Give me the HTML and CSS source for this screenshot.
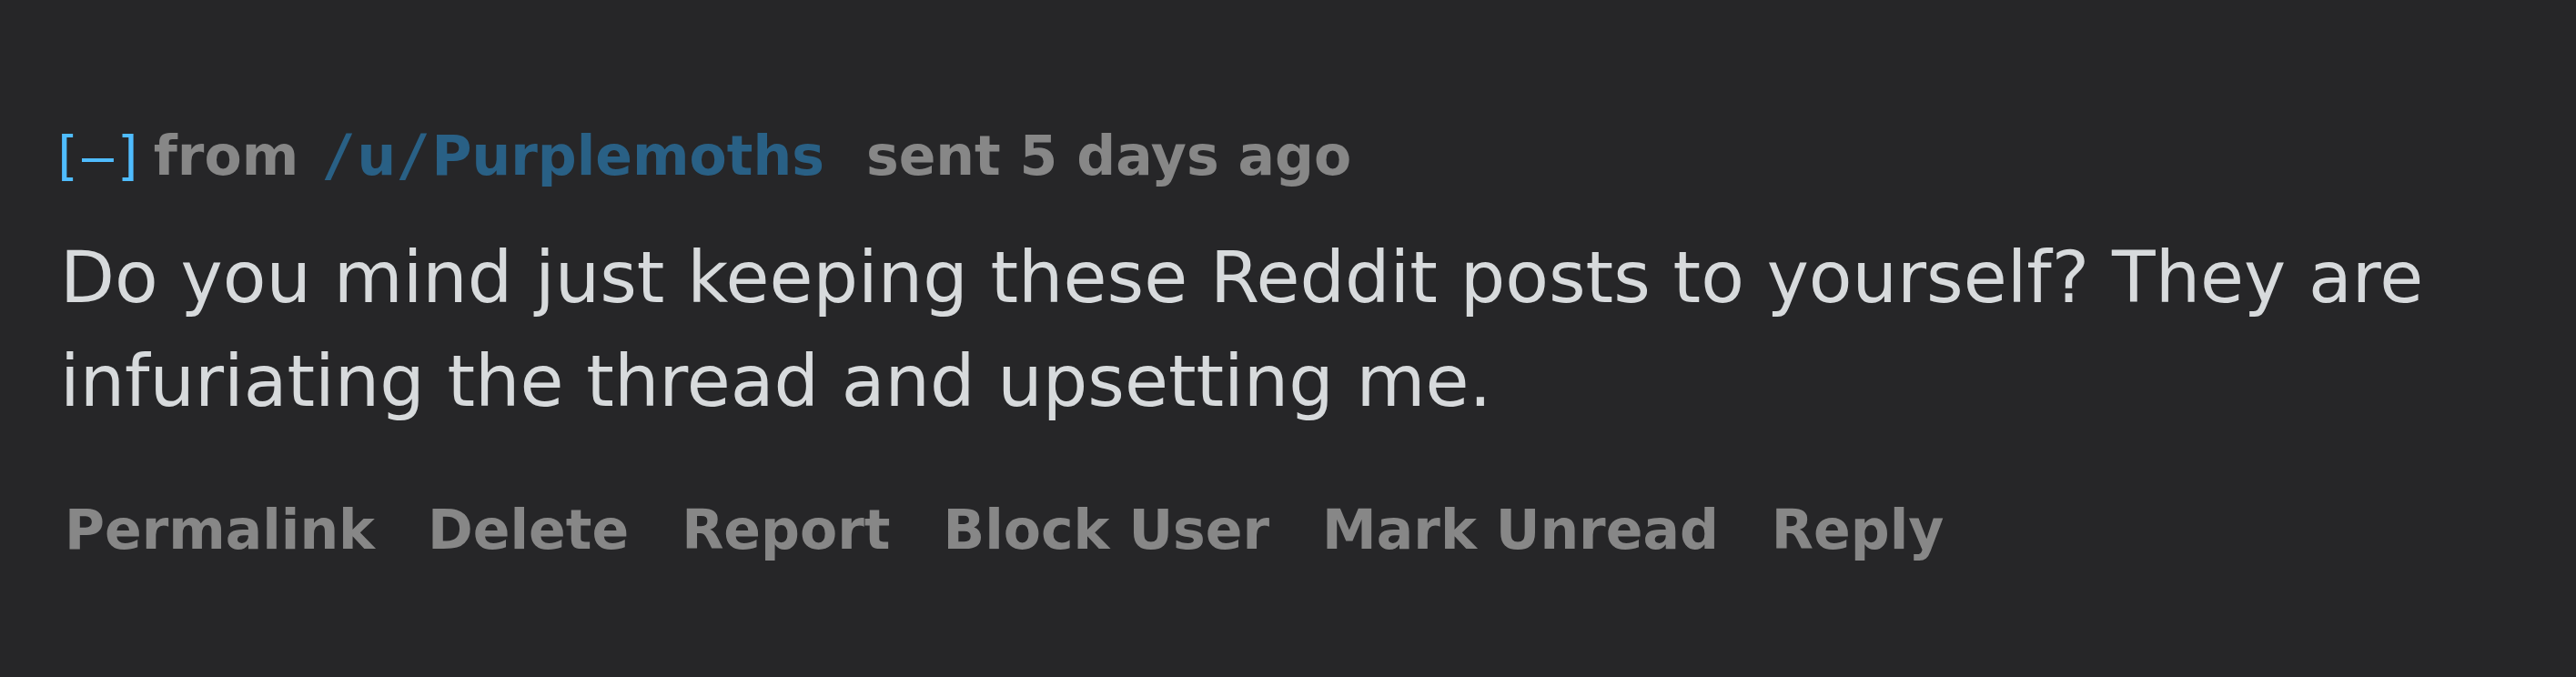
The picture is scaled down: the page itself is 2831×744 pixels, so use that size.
FILE: index.html
```html
<!DOCTYPE html>
<html>
<head>
<meta charset="utf-8">
<link rel="stylesheet" href="styles.css">
</head>
<body>
<div class="message">
  <div class="tagline">
    <span class="expand">[–]</span>
    <span class="from">from</span>
    <a class="author"><span class="prefix">/<span class="u">u</span>/</span>Purplemoths</a>
    <span class="time">sent 5 days ago</span>
  </div>
  <div class="md">
    <p>Do you mind just keeping these Reddit posts to yourself? They are infuriating the thread and upsetting me.</p>
  </div>
  <ul class="buttons">
    <li>Permalink</li>
    <li>Delete</li>
    <li>Report</li>
    <li>Block User</li>
    <li>Mark Unread</li>
    <li>Reply</li>
  </ul>
</div>
</body>
</html>
```

FILE: styles.css
```css
html, body {
  margin: 0;
  padding: 0;
  background: #262628;
  width: 2831px;
  height: 744px;
  overflow: hidden;
}
.message {
  padding: 133px 0 0 59px;
  font-family: "DejaVu Sans", Verdana, sans-serif;
}
.tagline {
  display: flex;
  align-items: baseline;
  margin-left: -4px;
  font-size: 60px;
  font-weight: bold;
  line-height: 76px;
  color: #878787;
  white-space: nowrap;
}
.expand {
  font-family: "DejaVu Sans Mono", monospace;
  font-size: 58px;
  color: #4fbcff;
  font-weight: normal;
  margin-right: 9px;
}
.from {
  margin-right: 25px;
}
.author {
  color: #296085;
  margin-right: 46px;
}
.prefix {
  font-family: "DejaVu Sans Mono", monospace;
  font-size: 62px;
  letter-spacing: 2px;
}
.prefix .u {
  font-family: "DejaVu Sans", Verdana, sans-serif;
  font-size: 60px;
  letter-spacing: 0;
}
.md {
  width: 2720px;
  margin: 38px 0 0 7px;
}
.md p {
  margin: 0;
  font-size: 78px;
  line-height: 114px;
  color: #d7dadc;
}
.buttons {
  list-style: none;
  margin: 68px 0 0 12px;
  padding: 0;
  display: flex;
  gap: 58px;
  font-size: 60px;
  font-weight: bold;
  line-height: 76px;
  color: #878787;
}
```
